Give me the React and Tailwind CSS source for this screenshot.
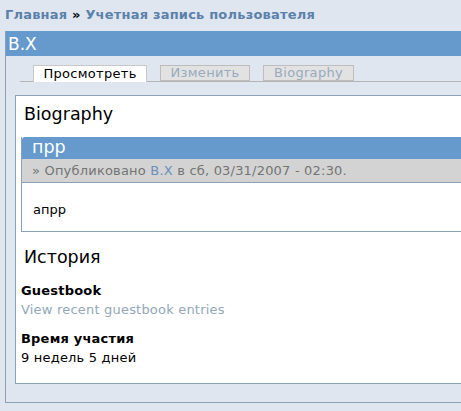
import React from 'react';

const font = { fontFamily: '"DejaVu Sans", Verdana, sans-serif' };

export default function App() {
  return (
    <div className="w-[461px] h-[411px] overflow-hidden bg-[#dfe6f0] text-black" style={font}>
      <div className="pt-[6px] pl-[5px] text-[13px] leading-[18px] font-bold tracking-[0.2px] text-[#5b81ab] whitespace-nowrap">
        Главная <span className="text-black">»</span> Учетная запись пользователя
      </div>

      <div className="ml-[5px] mt-[7px] w-[500px] border-l border-b border-[#8ba1b5]">
        <div className="h-[25px] bg-[#6699cc] text-white text-[17px] leading-[26px] pl-[2px]">В.Х</div>

        <div className="pt-[9px] pl-[9px] pb-[18px]">
          <div className="ml-[5px] pl-[13px] flex gap-[13px] border-b border-[#b4b4b4] h-[17px]">
            <div className="h-[17px] w-[114px] bg-white border border-b-0 border-[#c8c8c8] text-[13px] leading-[15px] tracking-[0.3px] text-center">Просмотреть</div>
            <div className="h-[16px] w-[90px] bg-[#e2e2e2] border border-[#bdbdbd] text-[13px] leading-[14px] tracking-[0.3px] text-center text-[#98aabe]">Изменить</div>
            <div className="h-[16px] w-[91px] bg-[#e2e2e2] border border-[#bdbdbd] text-[13px] leading-[14px] tracking-[0.3px] text-center text-[#98aabe]">Biography</div>
          </div>

          <div className="mt-[13px] bg-white border border-[#8ba1b5] h-[289px] pl-[5px]">
            <div className="pl-[3px] pt-[7px] text-[17.5px] leading-[22px]">Biography</div>

            <div className="mt-[12px] border-l border-b border-[#8ba1b5]">
              <div className="h-[22px] bg-[#6699cc] text-white text-[17.5px] leading-[20px] pl-[10px] rounded-tl-[3px]">прр</div>
              <div className="h-[24px] bg-[#d3d3d3] border-b border-[#8ba1b5] text-[13px] leading-[23px] tracking-[0.2px] pl-[10px] text-[#747474] whitespace-nowrap">
                » Опубликовано <span className="text-[#6d8fb8]">В.Х</span> в сб, 03/31/2007 - 02:30.
              </div>
              <div className="h-[48px] text-[13px] leading-[16px] pl-[11px] pt-[19px]">апрр</div>
            </div>

            <div className="pl-[3px] pt-[14px] text-[17.5px] leading-[22px]">История</div>
            <div className="mt-[13px] text-[13px] leading-[19px] tracking-[0.2px]">
              <div className="font-bold">Guestbook</div>
              <div className="text-[#93a7b8]">View recent guestbook entries</div>
              <div className="font-bold mt-[10px]">Время участия</div>
              <div>9 недель 5 дней</div>
            </div>
          </div>
        </div>
      </div>
    </div>
  );
}
